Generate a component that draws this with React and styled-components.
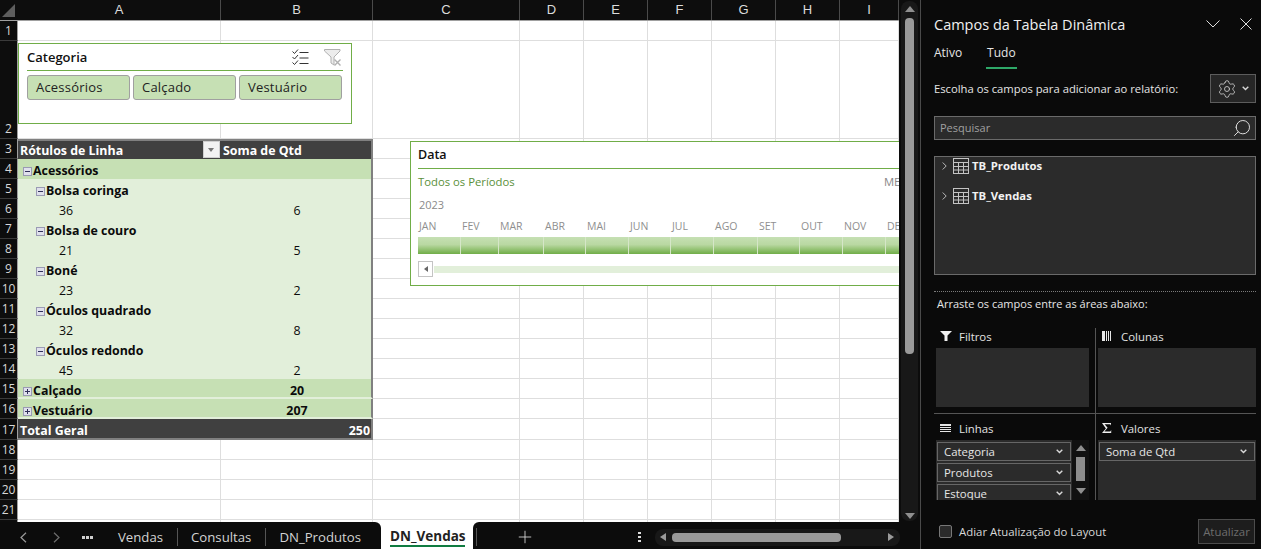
import React from 'react'
import styled, { createGlobalStyle } from 'styled-components'
import { Plus, Settings, Search } from 'lucide-react'

const COLUMNS = [
  ['A', 203],
  ['B', 152],
  ['C', 147],
  ['D', 64],
  ['E', 64],
  ['F', 64],
  ['G', 64],
  ['H', 64],
  ['I', 59]
]

const Global = createGlobalStyle`
  html, body { margin: 0; padding: 0; background: #0a0a0a; overflow: hidden; }
  * { box-sizing: border-box; }
  body { font-family: 'Open Sans', 'Noto Sans', sans-serif; }
`

const Page = styled.div`
  width: 1261px;
  height: 549px;
  display: flex;
  overflow: hidden;
`

const Workbook = styled.div`
  width: 921px;
  flex: none;
  display: flex;
  flex-direction: column;
  border-right: 1px solid #4a4a4a;
`

const SheetArea = styled.div`
  height: 522px;
  flex: none;
  display: flex;
  overflow: hidden;
`

const Sheet = styled.div`
  position: relative;
  width: 899px;
  flex: none;
  overflow: hidden;
  background: #fff;
`

const Header = styled.div`
  display: flex;
  height: 21px;
  background: #0d0d0d;
  border-bottom: 1px solid #a0a0a0;
`

const Corner = styled.div`
  width: 18px;
  flex: none;
  position: relative;
  &::after {
    content: '';
    position: absolute;
    right: 3px;
    bottom: 3px;
    border-style: solid;
    border-width: 0 0 13px 13px;
    border-color: transparent transparent #5e5e5e transparent;
  }
`

const ColumnName = styled.div`
  flex: none;
  width: ${p => p.$width}px;
  border-right: 1px solid #4a4a4a;
  color: #dcdcdc;
  font: 13px 'Liberation Sans', sans-serif;
  line-height: 20px;
  text-align: center;
`

const Row = styled.div`
  display: flex;
  height: ${p => p.$height || 20}px;
`

const RowName = styled.div`
  flex: none;
  width: 18px;
  background: #0d0d0d;
  border-right: 1px solid #a0a0a0;
  border-bottom: 1px solid #3a3a3a;
  color: #d8d8d8;
  font: 12px/17px 'Open Sans', sans-serif;
  display: flex;
  align-items: flex-end;
  justify-content: center;
  padding-bottom: 1px;
`

const Cell = styled.div`
  flex: none;
  width: ${p => p.$width}px;
  border-right: 1px solid #dedede;
  border-bottom: 1px solid #dedede;
`

const darkKind = kind => kind === 'head' || kind === 'total'

const PivotBlock = styled.div`
  flex: none;
  width: 355px;
  display: flex;
  align-items: center;
  font-size: 12.4px;
  line-height: 18px;
  padding-top: ${p => (p.$kind === 'total' ? 4 : p.$closed ? 6 : p.$kind === 'head' ? 2 : 4)}px;
  color: ${p => (darkKind(p.$kind) ? '#fff' : '#0b0b0b')};
  font-weight: ${p => (p.$kind === 'value' ? 400 : 700)};
  background: ${p =>
    darkKind(p.$kind) ? '#404040' : p.$kind === 'group' ? '#c6e0b4' : '#e2efda'};
  border-right: 2px solid #808080;
  ${p => p.$kind === 'head' && 'border-top: 2px solid #808080;'}
  ${p => p.$kind === 'total' && 'border-bottom: 2px solid #808080;'}
  ${p => p.$closed && 'border-bottom: 2px solid #e2efda;'}
`

const PivotLabel = styled.div`
  width: 203px;
  flex: none;
  display: flex;
  align-items: center;
  position: relative;
  padding-left: ${p => p.$indent}px;
`

const PivotValue = styled.div`
  flex: 1;
  text-align: ${p => (p.$left ? 'left' : p.$right ? 'right' : 'center')};
  padding-right: ${p => (p.$right ? 1 : 0)}px;
  padding-left: ${p => (p.$right ? 0 : 2)}px;
`

const Toggle = styled.span`
  width: 9px;
  height: 9px;
  flex: none;
  margin-right: 1px;
  background: #dfe0ec;
  border: 1px solid #9a9ab4;
  position: relative;
  &::before {
    content: '';
    position: absolute;
    left: 1px;
    right: 1px;
    top: 3px;
    height: 1px;
    background: #30305a;
  }
  ${p =>
    p.$closed &&
    `&::after {
      content: '';
      position: absolute;
      top: 1px;
      bottom: 1px;
      left: 3px;
      width: 1px;
      background: #30305a;
    }`}
`

const FilterButton = styled.span`
  position: absolute;
  right: 1px;
  top: -1px;
  width: 17px;
  height: 17px;
  background: #f2f2f2;
  border: 1px solid #cfcfcf;
  &::after {
    content: '';
    position: absolute;
    left: 4px;
    top: 6px;
    border-style: solid;
    border-width: 4px 3.5px 0 3.5px;
    border-color: #777 transparent transparent transparent;
  }
`

const Slicer = styled.div`
  position: absolute;
  left: 18px;
  top: 43px;
  width: 334px;
  height: 81px;
  background: #fff;
  border: 1px solid #70ad47;
  padding: 0 8px;
`

const SlicerHead = styled.div`
  height: 27px;
  display: flex;
  align-items: center;
  border-bottom: 1px solid #70ad47;
  color: #111;
  font-size: 13px;
  font-weight: 600;
`

const SlicerTitle = styled.span`
  flex: 1;
`

const SlicerIcons = styled.div`
  display: flex;
  gap: 15px;
  align-items: center;
  padding-right: 2px;
`

const SlicerItems = styled.div`
  display: flex;
  gap: 3px;
  margin-top: 4px;
`

const SlicerItem = styled.div`
  width: 103px;
  height: 25px;
  background: #c6e0b4;
  border: 1px solid #a0a0a0;
  border-radius: 3px;
  padding-left: 8px;
  color: #222;
  font-size: 13px;
  line-height: 23px;
  letter-spacing: 0.2px;
`

const Timeline = styled.div`
  position: absolute;
  left: 410px;
  top: 141px;
  width: 520px;
  height: 145px;
  background: #fff;
  border: 1px solid #70ad47;
  padding: 0 7px;
`

const TimelineHead = styled.div`
  height: 27px;
  border-bottom: 1px solid #70ad47;
  color: #111;
  font-size: 12.5px;
  font-weight: 600;
  line-height: 25px;
`

const TimelineMeta = styled.div`
  display: flex;
  justify-content: space-between;
  height: 27px;
  padding: 5px 3px 0 0;
  font-size: 11.3px;
  line-height: 16px;
  color: #5a8f3a;
`

const TimelineLevel = styled.span`
  color: #888;
`

const Year = styled.div`
  color: #8a8a8a;
  font-size: 11px;
  line-height: 15px;
  height: 22px;
  padding: 1px 0 0 1px;
`

const Months = styled.div`
  display: flex;
  height: 19px;
`

const Month = styled.div`
  flex: none;
  width: ${p => p.$width}px;
  color: #8f8f8f;
  font-size: 10.5px;
  line-height: 16px;
  padding-left: 1px;
`

const Bars = styled.div`
  display: flex;
  height: 17px;
`

const Bar = styled.div`
  flex: none;
  width: ${p => p.$width}px;
  background: linear-gradient(#c6e0b4 0%, #b9d8a2 45%, #70ad47 100%);
  border-right: 1px solid #d5e6c8;
`

const TimelineScroll = styled.div`
  display: flex;
  align-items: center;
  gap: 1px;
  margin-top: 7px;
`

const ScrollArrow = styled.div`
  width: 15px;
  height: 16px;
  flex: none;
  border: 1px solid #c4c4c4;
  display: flex;
  align-items: center;
  justify-content: center;
  &::before {
    content: '';
    border-style: solid;
    border-width: 3.5px 4px 3.5px 0;
    border-color: transparent #666 transparent transparent;
  }
`

const ScrollTrack = styled.div`
  width: 480px;
  height: 7px;
  background: #e2efda;
`

const VScroll = styled.div`
  width: 21px;
  flex: none;
  background: #0c0c0c;
  padding: 1px 2px 1px 2px;
`

const VRail = styled.div`
  height: 100%;
  border-radius: 8px;
  background: #181818;
  display: flex;
  flex-direction: column;
  align-items: center;
  padding: 5px 0 2px;
`

const VThumb = styled.div`
  width: 9px;
  height: 336px;
  margin-top: 6px;
  background: #9a9a9a;
  border-radius: 4px;
`

const VSpacer = styled.div`
  flex: 1;
`

const Triangle = styled.div`
  width: 0;
  height: 0;
  flex: none;
  border-left: 5px solid transparent;
  border-right: 5px solid transparent;
  ${p => (p.$up ? 'border-bottom' : 'border-top')}: 6px solid #8f8f8f;
`

const TabBar = styled.div`
  height: 27px;
  flex: none;
  display: flex;
  background: #fff;
  color: #d4d4d4;
  font-size: 13.2px;
`

const TabsLeft = styled.div`
  width: 381px;
  flex: none;
  display: flex;
  align-items: center;
  background: #0c0c0c;
  border-top-right-radius: 6px;
  padding-top: 3px;
`

const TabsRight = styled.div`
  flex: 1;
  display: flex;
  align-items: center;
  background: #0c0c0c;
  border-top-left-radius: 6px;
  padding: 3px 0 0 3px;
`

const TabNav = styled.div`
  width: 104px;
  flex: none;
  padding-left: 20px;
  display: flex;
  align-items: center;
  gap: 26px;
`

const Dots = styled.span`
  width: 11px;
  height: 3px;
  margin-left: -4px;
  background: repeating-linear-gradient(90deg, #cfcfcf 0 3px, transparent 3px 4px);
`

const Tab = styled.div`
  height: 18px;
  padding: 0 14px 0 ${p => (p.$first ? 14 : 13)}px;
  line-height: 18px;
  border-left: ${p => (p.$first ? 'none' : '1px solid #555')};
  white-space: nowrap;
`

const ActiveTab = styled.div`
  width: 92px;
  flex: none;
  padding: 5px 0 0 9px;
  color: #222;
  font-size: 13.5px;
  font-weight: 700;
  white-space: nowrap;
  line-height: 18px;
  position: relative;
  &::after {
    content: '';
    position: absolute;
    left: 9px;
    right: 8px;
    top: 23px;
    height: 2px;
    background: #107c41;
  }
`

const AddTab = styled.div`
  width: 60px;
  height: 18px;
  flex: none;
  border-left: 1px solid #555;
  color: #ddd;
  padding-left: 38px;
  display: flex;
  align-items: center;
`

const SplitDots = styled.div`
  width: 3px;
  height: 12px;
  margin-left: 102px;
  flex: none;
  background: radial-gradient(circle at center, #ddd 1.2px, transparent 1.4px) 0 0 / 3px 4px;
`

const HScroll = styled.div`
  width: 245px;
  height: 17px;
  margin-left: 14px;
  flex: none;
  border-radius: 8px;
  background: #181818;
  display: flex;
  align-items: center;
  padding: 0 6px 0 5px;
`

const HThumb = styled.div`
  width: 169px;
  height: 9px;
  margin-left: 6px;
  border-radius: 4px;
  background: #9a9a9a;
`

const HArrow = styled.div`
  width: 0;
  height: 0;
  border-top: 4.5px solid transparent;
  border-bottom: 4.5px solid transparent;
  ${p => (p.$left ? 'border-right' : 'border-left')}: 6px solid #9a9a9a;
  ${p => !p.$left && 'margin-left: auto;'}
`

const Panel = styled.div`
  flex: 1;
  background: #0a0a0a;
  color: #e6e6e6;
  padding: 0 5px 0 13px;
  display: flex;
  flex-direction: column;
  font-size: 11.4px;
`

const PanelHead = styled.div`
  height: 46px;
  flex: none;
  display: flex;
  align-items: center;
  padding-top: 2px;
  font-size: 14.5px;
  color: #f0f0f0;
`

const PanelTitle = styled.span`
  flex: 1;
`

const PanelIcons = styled.div`
  display: flex;
  gap: 20px;
  align-items: center;
  padding-right: 4px;
`

const PanelTabs = styled.div`
  display: flex;
  gap: 25px;
  height: 23px;
  flex: none;
  font-size: 12px;
`

const PanelTab = styled.div`
  height: 23px;
  line-height: 13px;
  position: relative;
  ${p =>
    p.$active &&
    `&::after {
      content: '';
      position: absolute;
      left: -1px;
      right: -1px;
      bottom: 0;
      height: 2px;
      background: #2ea868;
    }`}
`

const ChooseRow = styled.div`
  height: 29px;
  flex: none;
  margin-top: 5px;
  display: flex;
  align-items: center;
  justify-content: space-between;
  font-size: 11.25px;
`

const GearButton = styled.div`
  width: 46px;
  height: 29px;
  background: #262626;
  border: 1px solid #5c5c5c;
  display: flex;
  align-items: center;
  justify-content: center;
  gap: 5px;
  color: #d0d0d0;
`

const SearchBox = styled.div`
  height: 24px;
  flex: none;
  margin-top: 13px;
  background: #2b2b2b;
  border: 1px solid #6a6a6a;
  padding: 0 3px 0 5px;
  display: flex;
  align-items: center;
  justify-content: space-between;
  color: #a0a0a0;
  font-size: 11px;
`

const SearchHint = styled.span`
  padding-bottom: 2px;
`

const SearchIcon = styled(Search)`
  transform: scaleX(-1);
`

const FieldList = styled.div`
  height: 119px;
  flex: none;
  margin-top: 16px;
  background: #2b2b2b;
  border: 1px solid #6a6a6a;
`

const FieldRow = styled.div`
  height: 18px;
  margin-bottom: 12px;
  padding-left: 7px;
  display: flex;
  align-items: center;
  gap: 3px;
  color: #f2f2f2;
  font-size: 11.3px;
  font-weight: 700;
`

const FieldName = styled.span`
  padding-bottom: 2px;
`

const FieldChevron = styled.svg`
  margin-right: 3px;
`

const AreaHint = styled.div`
  margin-top: 16px;
  height: 37px;
  flex: none;
  padding: 4px 0 0 3px;
  border-top: 1px dotted #7a7a7a;
  font-size: 11px;
  line-height: 16px;
`

const AreaGrid = styled.div`
  display: grid;
  grid-template-columns: 161px 161px;
  grid-template-rows: 86px 86px;
  flex: none;
`

const AreaCell = styled.div`
  overflow: hidden;
  display: flex;
  flex-direction: column;
  ${p => (p.$right ? 'border-left: 1px solid #555; padding-left: 2px;' : 'padding: 0 6px 0 2px;')}
  ${p => p.$top && 'border-bottom: 1px solid #555;'}
`

const AreaLabel = styled.div`
  height: ${p => (p.$top ? 20 : 26)}px;
  flex: none;
  display: flex;
  align-items: center;
  padding: ${p => (p.$top ? '0 0 4px 4px' : '2px 0 0 4px')};
  color: #e2e2e2;
`

const IconSlot = styled.span`
  width: 19px;
  flex: none;
  display: flex;
  align-items: center;
`

const AreaBox = styled.div`
  flex: ${p => (p.$top ? 'none' : 1)};
  height: ${p => (p.$top ? '59px' : 'auto')};
  min-height: 0;
  background: #2b2b2b;
  display: flex;
  overflow: hidden;
`

const PillList = styled.div`
  flex: 1;
  padding: 2px 1px 0 1px;
  display: flex;
  flex-direction: column;
  gap: 2px;
`

const Pill = styled.div`
  height: 19px;
  flex: none;
  border: 1px solid #666;
  background: #2b2b2b;
  display: flex;
  align-items: center;
  justify-content: space-between;
  padding: 0 7px 0 6px;
  color: #e6e6e6;
`

const ListScroll = styled.div`
  width: 17px;
  flex: none;
  background: #111;
  display: flex;
  flex-direction: column;
  align-items: center;
  padding-top: 5px;
`

const ListThumb = styled.div`
  width: 9px;
  height: 24px;
  flex: none;
  margin: 6px 0 7px;
  background: #8c8c8c;
`

const PanelFoot = styled.div`
  flex: 1;
  display: flex;
  align-items: flex-start;
  justify-content: space-between;
  padding: 19px 1px 0 5px;
  color: #d8d8d8;
`

const CheckLabel = styled.div`
  display: flex;
  align-items: center;
  gap: 7px;
  height: 25px;
`

const CheckBox = styled.span`
  width: 13px;
  height: 13px;
  border: 1px solid #777;
  border-radius: 2px;
  background: #2b2b2b;
`

const UpdateButton = styled.div`
  width: 57px;
  height: 25px;
  border: 1px solid #4c4c4c;
  background: #1d1d1d;
  color: #6d6d6d;
  text-align: center;
  line-height: 23px;
`

const Line = ({ w, h, d, color = '#ddd', width = 1 }) => (
  <svg width={w} height={h} viewBox={`0 0 ${w} ${h}`} fill="none" stroke={color} strokeWidth={width}>
    <path d={d} />
  </svg>
)

const SmallChevron = () => <Line w={7} h={5} d="M0.7 0.8L3.5 3.6L6.3 0.8" color="#d8d8d8" width={1.4} />

const CheckListIcon = () => (
  <svg width="17" height="16" viewBox="0 0 17 16" fill="none" stroke="#333" strokeWidth="1">
    <path d="M0.5 2.5l2 2 3.5-4M0.5 8l2 2 3.5-4M0.5 13.5l2 2 3.5-4" />
    <path d="M7.5 3.5h9M7.5 9h9M7.5 14.5h9" />
  </svg>
)

const ClearFilterIcon = () => (
  <svg width="17" height="17" viewBox="0 0 17 17" fill="none" stroke="#b0b0b0" strokeWidth="1">
    <path d="M0.5 0.5h15.5v1.5l-6 6v8l-3-2v-6l-6.5-6z" fill="#ececec" />
    <path d="M10.5 10.5l6 6M16.5 10.5l-6 6" strokeWidth="1.4" />
  </svg>
)

const TableIcon = () => (
  <svg width="16" height="16" viewBox="0 0 16 16" fill="none" stroke="#c4c4c4" strokeWidth="1">
    <rect x="0.5" y="0.5" width="15" height="15" />
    <path d="M0.5 4.5h15M0.5 8.5h15M0.5 12h15M5.5 4.5v11M10.5 4.5v11" />
  </svg>
)

const RowsIcon = () => (
  <svg width="11" height="8" viewBox="0 0 11 8" fill="#e6e6e6">
    <path d="M0 0h11v2H0zM0 3h11v1H0zM0 5h11v1H0zM0 7h11v1H0z" />
  </svg>
)

const ColumnsIcon = () => (
  <svg width="10" height="10" viewBox="0 0 10 10" fill="#e6e6e6">
    <path d="M0 0h3v10H0zM4 0h1v10H4zM6 0h1v10H6zM8 0h1v10H8z" />
  </svg>
)

const FilterIcon = () => (
  <svg width="12" height="10" viewBox="0 0 12 10" fill="#f0f0f0">
    <path d="M0 0h12L7.5 4.5V10h-3V4.5z" />
  </svg>
)

const SigmaIcon = () => (
  <svg width="10" height="10" viewBox="0 0 10 10" fill="#f0f0f0">
    <path d="M0 0h9v2.6L8.3 1.2H2.6L5.6 4.8 2.4 8.6h5.9L9.2 7v3H0l3.9-4.6z" />
  </svg>
)

const pivotRows = [
  { kind: 'group', indent: 5, toggle: 'open', label: 'Acessórios' },
  { kind: 'item', indent: 18, toggle: 'open', label: 'Bolsa coringa' },
  { kind: 'value', indent: 41, label: '36', value: '6' },
  { kind: 'item', indent: 18, toggle: 'open', label: 'Bolsa de couro' },
  { kind: 'value', indent: 41, label: '21', value: '5' },
  { kind: 'item', indent: 18, toggle: 'open', label: 'Boné' },
  { kind: 'value', indent: 41, label: '23', value: '2' },
  { kind: 'item', indent: 18, toggle: 'open', label: 'Óculos quadrado' },
  { kind: 'value', indent: 41, label: '32', value: '8' },
  { kind: 'item', indent: 18, toggle: 'open', label: 'Óculos redondo' },
  { kind: 'value', indent: 41, label: '45', value: '2' },
  { kind: 'group', indent: 5, toggle: 'closed', label: 'Calçado', value: '20', closed: true },
  { kind: 'group', indent: 5, toggle: 'closed', label: 'Vestuário', value: '207', closed: true }
]

const fields = ['TB_Produtos', 'TB_Vendas']

const months = [
  ['JAN', 43], ['FEV', 38], ['MAR', 45], ['ABR', 42], ['MAI', 43], ['JUN', 42],
  ['JUL', 43], ['AGO', 44], ['SET', 42], ['OUT', 43], ['NOV', 43], ['DEZ', 43]
]

const Blanks = ({ from = 0 }) =>
  COLUMNS.slice(from).map(([name, width]) => <Cell key={name} $width={width} />)

const PivotRow = ({ number, row }) => (
  <Row>
    <RowName>{number}</RowName>
    <PivotBlock $kind={row.kind} $closed={row.closed}>
      <PivotLabel $indent={row.indent}>
        {row.toggle && <Toggle $closed={row.toggle === 'closed'} />}
        {row.label}
      </PivotLabel>
      <PivotValue>{row.value}</PivotValue>
    </PivotBlock>
    <Blanks from={2} />
  </Row>
)

const Spreadsheet = () => (
  <Sheet>
    <Header>
      <Corner />
      {COLUMNS.map(([name, width]) => (
        <ColumnName key={name} $width={width}>{name}</ColumnName>
      ))}
    </Header>
    <Row>
      <RowName>1</RowName>
      <Blanks />
    </Row>
    <Row $height={98}>
      <RowName>2</RowName>
      <Blanks />
    </Row>
    <Row>
      <RowName>3</RowName>
      <PivotBlock $kind="head">
        <PivotLabel $indent={2}>
          Rótulos de Linha
          <FilterButton />
        </PivotLabel>
        <PivotValue $left>Soma de Qtd</PivotValue>
      </PivotBlock>
      <Blanks from={2} />
    </Row>
    {pivotRows.map((row, i) => (
      <PivotRow key={i} number={i + 4} row={row} />
    ))}
    <Row $height={21}>
      <RowName>17</RowName>
      <PivotBlock $kind="total">
        <PivotLabel $indent={2}>Total Geral</PivotLabel>
        <PivotValue $right>250</PivotValue>
      </PivotBlock>
      <Blanks from={2} />
    </Row>
    {[18, 19, 20, 21, 22].map(n => (
      <Row key={n}>
        <RowName>{n === 22 ? '' : n}</RowName>
        <Blanks />
      </Row>
    ))}

    <Slicer>
      <SlicerHead>
        <SlicerTitle>Categoria</SlicerTitle>
        <SlicerIcons>
          <CheckListIcon />
          <ClearFilterIcon />
        </SlicerIcons>
      </SlicerHead>
      <SlicerItems>
        <SlicerItem>Acessórios</SlicerItem>
        <SlicerItem>Calçado</SlicerItem>
        <SlicerItem>Vestuário</SlicerItem>
      </SlicerItems>
    </Slicer>

    <Timeline>
      <TimelineHead>Data</TimelineHead>
      <TimelineMeta>
        <span>Todos os Períodos</span>
        <TimelineLevel>MESES</TimelineLevel>
      </TimelineMeta>
      <Year>2023</Year>
      <Months>
        {months.map(([name, width]) => (
          <Month key={name} $width={width}>{name}</Month>
        ))}
      </Months>
      <Bars>
        {months.map(([name, width]) => (
          <Bar key={name} $width={width} />
        ))}
      </Bars>
      <TimelineScroll>
        <ScrollArrow />
        <ScrollTrack />
      </TimelineScroll>
    </Timeline>
  </Sheet>
)

const App = () => (
  <Page>
    <Global />
    <Workbook>
      <SheetArea>
        <Spreadsheet />
        <VScroll>
          <VRail>
            <Triangle $up />
            <VThumb />
            <VSpacer />
            <Triangle />
          </VRail>
        </VScroll>
      </SheetArea>
      <TabBar>
        <TabsLeft>
          <TabNav>
            <Line w={7} h={11} d="M6 0.7L1 5.5L6 10.3" color="#9a9a9a" width={1.2} />
            <Line w={7} h={11} d="M1 0.7L6 5.5L1 10.3" color="#6e6e6e" width={1.2} />
            <Dots />
          </TabNav>
          <Tab $first>Vendas</Tab>
          <Tab>Consultas</Tab>
          <Tab>DN_Produtos</Tab>
        </TabsLeft>
        <ActiveTab>DN_Vendas</ActiveTab>
        <TabsRight>
          <AddTab>
            <Plus size={20} strokeWidth={1} />
          </AddTab>
          <SplitDots />
          <HScroll>
            <HArrow $left />
            <HThumb />
            <HArrow />
          </HScroll>
        </TabsRight>
      </TabBar>
    </Workbook>
    <Panel>
      <PanelHead>
        <PanelTitle>Campos da Tabela Dinâmica</PanelTitle>
        <PanelIcons>
          <Line w={14} h={8} d="M0.5 0.5L7 7L13.5 0.5" />
          <Line w={12} h={12} d="M0.5 0.5L11.5 11.5M11.5 0.5L0.5 11.5" />
        </PanelIcons>
      </PanelHead>
      <PanelTabs>
        <PanelTab>Ativo</PanelTab>
        <PanelTab $active>Tudo</PanelTab>
      </PanelTabs>
      <ChooseRow>
        Escolha os campos para adicionar ao relatório:
        <GearButton>
          <Settings size={20} strokeWidth={1} />
          <SmallChevron />
        </GearButton>
      </ChooseRow>
      <SearchBox>
        <SearchHint>Pesquisar</SearchHint>
        <SearchIcon size={20} strokeWidth={1.2} color="#ddd" />
      </SearchBox>
      <FieldList>
        {fields.map(name => (
          <FieldRow key={name}>
            <FieldChevron width="5" height="8" viewBox="0 0 5 8" fill="none" stroke="#bbb">
              <path d="M0.7 0.5L4.2 4L0.7 7.5" />
            </FieldChevron>
            <TableIcon />
            <FieldName>{name}</FieldName>
          </FieldRow>
        ))}
      </FieldList>
      <AreaHint>Arraste os campos entre as áreas abaixo:</AreaHint>
      <AreaGrid>
        <AreaCell $top>
          <AreaLabel $top><IconSlot><FilterIcon /></IconSlot>Filtros</AreaLabel>
          <AreaBox $top />
        </AreaCell>
        <AreaCell $top $right>
          <AreaLabel $top><IconSlot><ColumnsIcon /></IconSlot>Colunas</AreaLabel>
          <AreaBox $top />
        </AreaCell>
        <AreaCell>
          <AreaLabel><IconSlot><RowsIcon /></IconSlot>Linhas</AreaLabel>
          <AreaBox>
            <PillList>
              <Pill>Categoria<SmallChevron /></Pill>
              <Pill>Produtos<SmallChevron /></Pill>
              <Pill>Estoque<SmallChevron /></Pill>
            </PillList>
            <ListScroll>
              <Triangle $up />
              <ListThumb />
              <Triangle />
            </ListScroll>
          </AreaBox>
        </AreaCell>
        <AreaCell $right>
          <AreaLabel><IconSlot><SigmaIcon /></IconSlot>Valores</AreaLabel>
          <AreaBox>
            <PillList>
              <Pill>Soma de Qtd<SmallChevron /></Pill>
            </PillList>
          </AreaBox>
        </AreaCell>
      </AreaGrid>
      <PanelFoot>
        <CheckLabel>
          <CheckBox />
          Adiar Atualização do Layout
        </CheckLabel>
        <UpdateButton>Atualizar</UpdateButton>
      </PanelFoot>
    </Panel>
  </Page>
)

export default App
